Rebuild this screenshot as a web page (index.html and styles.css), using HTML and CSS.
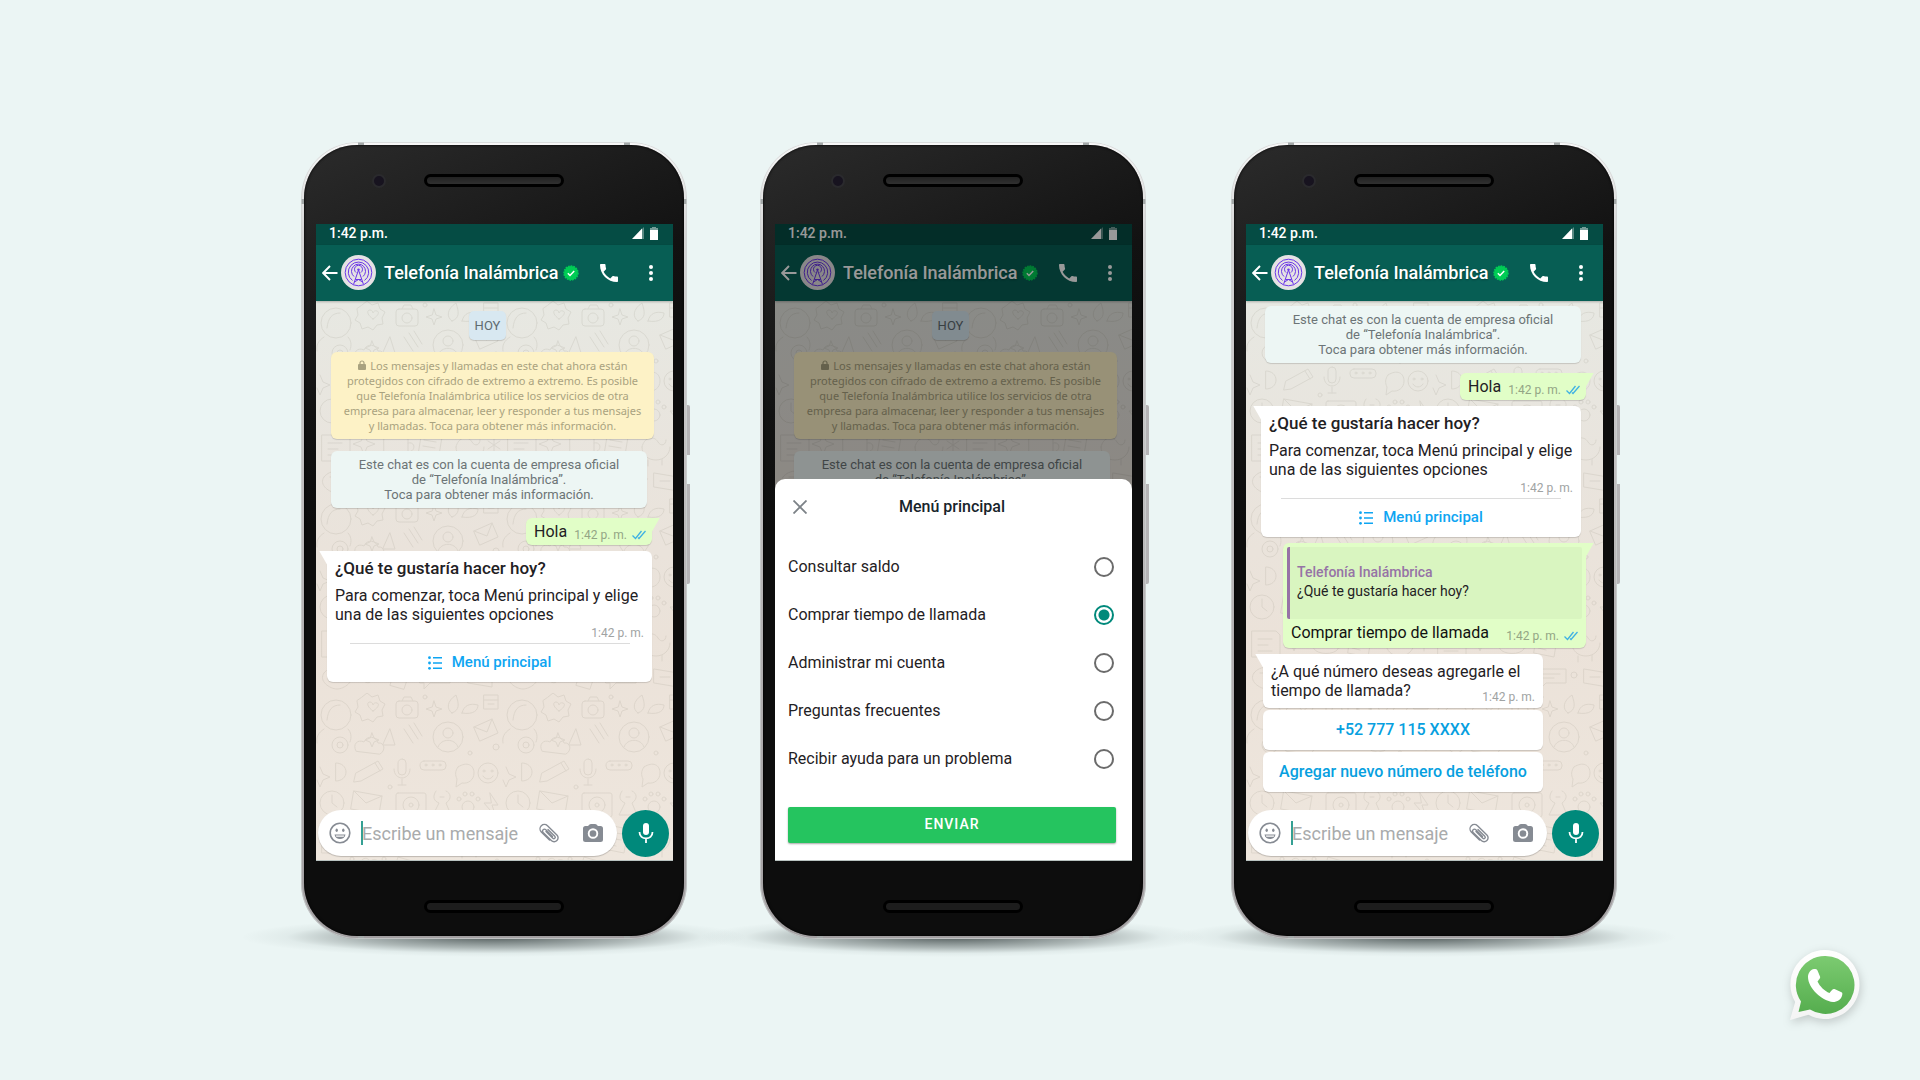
FILE: index.html
```html
<!DOCTYPE html>
<html lang="es">
<head>
<meta charset="utf-8">
<meta name="viewport" content="width=device-width, initial-scale=1">
<title>Telefonía Inalámbrica</title>
<link rel="stylesheet" href="styles.css">
</head>
<body>
<svg class="defs" width="0" height="0" aria-hidden="true">
  <defs>
    <pattern id="doodles" width="186" height="196" patternUnits="userSpaceOnUse">
      <g fill="none" stroke="#8c8878" stroke-width="1" stroke-linecap="round" stroke-linejoin="round">
        <circle cx="20" cy="22" r="15"/><path d="M11 27c1-10 5-15 13-15M8 36c-6 4-8 8-7 14M32 36c3 3 4 8 2 13"/>
        <path d="M46 4l5-4 5 4 6-2 2 6 5 3-3 6 1 6-6 1-4 5-5-3-6 2-2-6-5-3 3-5-1-6z"/><path d="M57 18c-7-5-6-9-3-9 2 0 3 2 3 3 0-1 2-3 4-2 3 1 1 5-4 8z"/>
        <rect x="80" y="8" width="22" height="17" rx="3"/><circle cx="91" cy="17" r="5"/><path d="M86 8l2-4h7l2 4"/>
        <path d="M118 8l2 6 6 2-6 2-2 6-2-6-6-2 6-2z"/><circle cx="109" cy="4" r="2"/>
        <path d="M136 20c-6-4-5-12 4-18 3 9 4 15-4 18zM146 20c12 2 16-3 16-8-8-2-14 0-16 8z"/>
        <path d="M168 2h14v14h-14zM168 7h14M172 11h6"/>
        <circle cx="132" cy="44" r="15"/><circle cx="132" cy="40" r="5"/><path d="M122 54c3-9 17-9 20 0"/>
        <path d="M88 36l9 14M93 32l9 14M98 30l8 13M74 36l5 16h-12zM56 40l2 5 5 2-5 2-2 5-2-5-5-2 5-2z"/>
        <path d="M40 58c-4-7 2-12 8-9 3-7 12-6 14 1 7-1 8 8 2 11z"/><circle cx="24" cy="52" r="8"/><circle cx="24" cy="52" r="3"/>
        <path d="M158 34l18-8 6 14-18 8zM158 34l13 5 5-13"/><circle cx="180" cy="54" r="3"/><circle cx="154" cy="60" r="2"/>
        <path d="M4 74l3 7 7 3-7 3-3 7-3-7M20 70c6 0 10 4 10 9s-4 9-10 9z"/>
        <path d="M40 80l22-12 5 8-22 12-7 1zM59 70l5 8"/>
        <rect x="82" y="66" width="8" height="16" rx="4"/><path d="M78 76c0 12 16 12 16 0M86 86v6M82 92h8"/>
        <rect x="104" y="68" width="26" height="9" rx="4"/><circle cx="110" cy="72" r="1"/><circle cx="117" cy="72" r="1"/><circle cx="124" cy="72" r="1"/>
        <path d="M142 74c9-6 16-2 16 6 0 7-6 11-12 10l-6 4 1-8c-2-4-2-8 1-12z"/>
        <circle cx="172" cy="80" r="10"/><circle cx="168" cy="78" r="1"/><circle cx="176" cy="78" r="1"/><path d="M167 83c2 4 8 4 10 0"/>
        <circle cx="16" cy="110" r="12"/><path d="M16 102v8l5 4"/>
        <path d="M38 98l28 5-3 18-28-5zM38 98l12 12 16-7"/><circle cx="74" cy="94" r="2"/><circle cx="70" cy="126" r="2"/>
        <rect x="80" y="100" width="30" height="24" rx="2"/><circle cx="95" cy="112" r="8"/><circle cx="95" cy="112" r="2"/>
        <path d="M120 98c-4 6-2 10 3 12l-6 12h18l-5-12c6-4 5-10 0-12M124 104h4"/>
        <circle cx="152" cy="114" r="6"/><circle cx="143" cy="106" r="2"/><circle cx="149" cy="101" r="2"/><circle cx="156" cy="101" r="2"/><circle cx="162" cy="106" r="2"/>
        <path d="M174 100l8 12h-6l4 12-12-14h7z"/>
        <path d="M6 134h24l4 4v22H6zM12 142h14M12 148h10M12 154h14"/>
        <path d="M48 132l3 8 8 3-8 3-3 8-3-8-8-3 8-3z"/>
        <path d="M68 138c8-6 18-6 24 0v14c-4 6-20 6-24 0zM92 142c8-2 8 9 0 9"/>
        <path d="M106 132l20 4-4 24-20-4zM108 139l12 2M107 145l12 2M106 151l8 2"/><circle cx="134" cy="134" r="2"/>
        <path d="M140 146c2-10 12-12 16-5 3 5 8 3 8-2M140 146c0 8 6 13 14 13s14-6 14-13M146 159v6M160 158v6"/>
        <path d="M178 134v20M172 140l12 8M184 140l-12 8"/>
        <path d="M8 176c6-8 20-8 26 0s-6 16-13 16-19-8-13-16zM14 176h14"/>
        <path d="M46 172c-4-6 6-10 8-3 4-6 12 0 7 5 6 3 1 12-5 8-2 7-11 3-8-3-7 0-8-7-2-7z"/>
        <path d="M74 188l8-24 14 4-8 24zM78 176l14 4"/><circle cx="68" cy="166" r="2"/>
        <path d="M104 172h30v14h-20l-6 6v-6h-4zM110 177h18M110 181h12"/><circle cx="142" cy="178" r="3"/>
        <path d="M152 172l24 4v14l-24-4zM158 180h10"/><circle cx="181" cy="168" r="2"/><circle cx="36" cy="166" r="2"/>
      </g>
    </pattern>
    <linearGradient id="logo-green" x1="0" y1="0" x2="0" y2="1"><stop offset="0" stop-color="#7ccb71"/><stop offset="1" stop-color="#55ad4e"/></linearGradient>
    <linearGradient id="logo-rim" x1="0" y1="0" x2="0" y2="1"><stop offset="0" stop-color="#fff"/><stop offset="1" stop-color="#f4f4f4"/></linearGradient>
  </defs>
  <symbol id="i-signal" viewBox="0 0 12 12"><path d="M10 1.500V12H0z" fill="#fff"/><path d="M12 0v12h-2V2z" fill="#fff" opacity=".35"/></symbol>
  <symbol id="i-battery" viewBox="0 0 8 13"><path d="M2 0h4v1h2v2H0V1h2z" fill="#fff" opacity=".45"/><path d="M0 3h8v10H0z" fill="#fff"/></symbol>
  <symbol id="i-back" viewBox="0 0 16 16"><path d="M15.500 8H1.500M8 1L1.200 8 8 15" fill="none" stroke="#fff" stroke-width="1.900"/></symbol>
  <symbol id="i-avatar" viewBox="0 0 35 35">
    <circle cx="17.500" cy="17.500" r="17.500" fill="#e5e2e4"/>
    <g fill="none" stroke="#6a35e8" stroke-width="1"><circle cx="17.500" cy="17.500" r="13.300"/><path d="M11.500 25.500a10.200 10.200 0 1 1 12 0M13 21.500a7 7 0 1 1 9 0M15.200 17.600a4 4 0 1 1 4.600 0M17.500 15L12.500 29.500M17.500 15l5 14.500M14.500 24.500h6M13.500 27l4-2.500 4 2.500"/></g>
    <circle cx="17.500" cy="14.600" r="1.200" fill="#6a35e8"/>
  </symbol>
  <symbol id="i-verified" viewBox="0 0 16 16"><circle cx="8" cy="8" r="7" fill="#0c5" stroke="#0c5" stroke-width="1.500" stroke-dasharray="1.700 1"/><path d="M4.800 8.300l2.200 2.200 4.200-4.500" fill="none" stroke="#fff" stroke-width="1.500"/></symbol>
  <symbol id="i-phone" viewBox="3 3 18 18"><path fill="#fff" d="M6.620 10.790c1.440 2.830 3.760 5.140 6.590 6.590l2.200-2.200c.270-.270.670-.360 1.020-.240 1.120.370 2.330.570 3.570.570.550 0 1 .450 1 1V20c0 .550-.450 1-1 1-9.390 0-17-7.610-17-17 0-.550.450-1 1-1h3.500c.550 0 1 .450 1 1 0 1.250.200 2.450.570 3.570.110.350.030.740-.250 1.020l-2.200 2.200z"/></symbol>
  <symbol id="i-more" viewBox="0 0 4 18"><g fill="#fff"><circle cx="2" cy="3" r="2"/><circle cx="2" cy="9" r="2"/><circle cx="2" cy="15" r="2"/></g></symbol>
  <symbol id="i-lock" viewBox="0 0 8 10"><path d="M2 5V3a2 2 0 0 1 4 0v2" fill="none" stroke="currentColor" stroke-width="1.200"/><rect y="4" width="8" height="6" rx="1" fill="currentColor"/></symbol>
  <symbol id="i-ticks" viewBox="0 0 14 10"><path d="M.500 5.500l3 3L9.500 1M6 7.500l1 1L13.500 1" fill="none" stroke="#3fb1e3" stroke-width="1.300"/></symbol>
  <symbol id="i-list" viewBox="0 0 14 14"><g fill="#0ea5f2"><circle cx="1.500" cy="1.700" r="1.400"/><circle cx="1.500" cy="7" r="1.400"/><circle cx="1.500" cy="12.300" r="1.400"/><path d="M5 1h9v1.500H5zM5 6.300h9v1.500H5zM5 11.600h9v1.500H5z"/></g></symbol>
  <symbol id="i-smile" viewBox="0 0 22 22"><circle cx="11" cy="11" r="9.800" fill="none" stroke="#868b93" stroke-width="1.600"/><ellipse cx="7.700" cy="8.300" rx="1.200" ry="1.700" fill="#868b93"/><ellipse cx="14.300" cy="8.300" rx="1.200" ry="1.700" fill="#868b93"/><path d="M5.500 12.500h11c-.800 6-10.200 6-11 0z" fill="#868b93"/><path d="M6.800 13.500h8.400l-.500 1.200H7.300z" fill="#fff"/></symbol>
  <symbol id="i-clip" viewBox="0 0 22 20"><path d="M13.500 13.500L6.800 6.700a1.900 1.900 0 0 0-2.700 2.700l8.200 8.200a3.900 3.900 0 0 0 5.600 0 3.900 3.900 0 0 0 0-5.600L8.500 2.700a4.400 4.400 0 0 0-6.200 0 4.400 4.400 0 0 0 0 6.200L10.500 17M9 6.500l6.800 6.800a1.400 1.400 0 0 1-2 2L7 8.500" fill="none" stroke="#868b93" stroke-width="1.400" stroke-linecap="round"/></symbol>
  <symbol id="i-camera" viewBox="0 0 20 18"><path d="M5 2l1.500-1.500Q7 0 8 0h4q1 0 1.500.500L15 2h2.500Q20 2 20 4.500v11q0 2.500-2.500 2.500h-15Q0 18 0 15.500v-11Q0 2 2.500 2z" fill="#868b93"/><circle cx="10" cy="9.500" r="4.300" fill="none" stroke="#fff" stroke-width="1.900"/></symbol>
  <symbol id="i-mic" viewBox="0 0 16 20"><rect x="5" y="0" width="6" height="12" rx="3" fill="#fff"/><path d="M1.500 9c0 8.500 13 8.500 13 0M8 15.500V20" fill="none" stroke="#fff" stroke-width="1.800"/></symbol>
  <symbol id="i-close" viewBox="0 0 14 14"><path d="M.500.500l13 13M13.500.500l-13 13" stroke="#7c8287" stroke-width="1.800"/></symbol>
</svg>

<main class="stage">
  <section class="phone" aria-label="Conversación">
    <div class="face">
      <span class="camera"></span><span class="speaker speaker-top"></span>
      <div class="screen">
        <div class="status"><span>1:42 p.m.</span><svg class="signal"><use href="#i-signal"/></svg><svg class="battery"><use href="#i-battery"/></svg></div>
        <header class="bar">
          <button class="icon back" aria-label="Atrás"><svg><use href="#i-back"/></svg></button>
          <svg class="avatar"><use href="#i-avatar"/></svg>
          <h2 class="name">Telefonía Inalámbrica</h2>
          <svg class="verified"><use href="#i-verified"/></svg>
          <button class="icon call" aria-label="Llamar"><svg><use href="#i-phone"/></svg></button>
          <button class="icon more" aria-label="Más opciones"><svg><use href="#i-more"/></svg></button>
        </header>
        <div class="chat">
          <svg class="wallpaper" aria-hidden="true"><rect width="100%" height="100%" fill="url(#doodles)"/></svg>
          <div class="messages">
            <p class="day">HOY</p>
            <p class="notice secure"><svg class="lock"><use href="#i-lock"/></svg> Los mensajes y llamadas en este chat ahora están<br>protegidos con cifrado de extremo a extremo. Es posible<br>que Telefonía Inalámbrica utilice los servicios de otra<br>empresa para almacenar, leer y responder a tus mensajes<br>y llamadas. Toca para obtener más información.</p>
            <p class="notice official">Este chat es con la cuenta de empresa oficial<br>de “Telefonía Inalámbrica”.<br>Toca para obtener más información.</p>
            <div class="bubble sent short"><p>Hola</p><span class="time">1:42 p. m.</span><svg class="ticks"><use href="#i-ticks"/></svg></div>
            <article class="bubble received menu">
              <h3>¿Qué te gustaría hacer hoy?</h3>
              <p>Para comenzar, toca Menú principal y elige<br>una de las siguientes opciones</p>
              <span class="time">1:42 p. m.</span>
              <button class="open-menu"><svg><use href="#i-list"/></svg>Menú principal</button>
            </article>
          </div>
          <div class="composer">
            <div class="field"><svg class="smile"><use href="#i-smile"/></svg><input type="text" aria-label="Mensaje" placeholder="Escribe un mensaje"><svg class="clip"><use href="#i-clip"/></svg><svg class="cam"><use href="#i-camera"/></svg></div>
            <button class="mic" aria-label="Grabar"><svg><use href="#i-mic"/></svg></button>
          </div>
        </div>
      </div>
      <span class="speaker speaker-bottom"></span>
    </div>
  </section>

  <section class="phone" aria-label="Menú">
    <div class="face">
      <span class="camera"></span><span class="speaker speaker-top"></span>
      <div class="screen">
        <div class="status"><span>1:42 p.m.</span><svg class="signal"><use href="#i-signal"/></svg><svg class="battery"><use href="#i-battery"/></svg></div>
        <header class="bar">
          <button class="icon back" aria-label="Atrás"><svg><use href="#i-back"/></svg></button>
          <svg class="avatar"><use href="#i-avatar"/></svg>
          <h2 class="name">Telefonía Inalámbrica</h2>
          <svg class="verified"><use href="#i-verified"/></svg>
          <button class="icon call" aria-label="Llamar"><svg><use href="#i-phone"/></svg></button>
          <button class="icon more" aria-label="Más opciones"><svg><use href="#i-more"/></svg></button>
        </header>
        <div class="chat">
          <svg class="wallpaper" aria-hidden="true"><rect width="100%" height="100%" fill="url(#doodles)"/></svg>
          <div class="messages inset">
            <p class="day">HOY</p>
            <p class="notice secure"><svg class="lock"><use href="#i-lock"/></svg> Los mensajes y llamadas en este chat ahora están<br>protegidos con cifrado de extremo a extremo. Es posible<br>que Telefonía Inalámbrica utilice los servicios de otra<br>empresa para almacenar, leer y responder a tus mensajes<br>y llamadas. Toca para obtener más información.</p>
            <p class="notice official">Este chat es con la cuenta de empresa oficial<br>de “Telefonía Inalámbrica”.</p>
          </div>
        </div>
        <div class="scrim">
          <form class="sheet">
            <div class="sheet-head"><button type="button" class="icon close" aria-label="Cerrar"><svg><use href="#i-close"/></svg></button><h3>Menú principal</h3></div>
            <div class="options">
              <label>Consultar saldo<input type="radio" name="option"></label>
              <label>Comprar tiempo de llamada<input type="radio" name="option" checked></label>
              <label>Administrar mi cuenta<input type="radio" name="option"></label>
              <label>Preguntas frecuentes<input type="radio" name="option"></label>
              <label>Recibir ayuda para un problema<input type="radio" name="option"></label>
            </div>
            <button type="button" class="submit">ENVIAR</button>
          </form>
        </div>
      </div>
      <span class="speaker speaker-bottom"></span>
    </div>
  </section>

  <section class="phone last" aria-label="Respuesta">
    <div class="face">
      <span class="camera"></span><span class="speaker speaker-top"></span>
      <div class="screen">
        <div class="status"><span>1:42 p.m.</span><svg class="signal"><use href="#i-signal"/></svg><svg class="battery"><use href="#i-battery"/></svg></div>
        <header class="bar">
          <button class="icon back" aria-label="Atrás"><svg><use href="#i-back"/></svg></button>
          <svg class="avatar"><use href="#i-avatar"/></svg>
          <h2 class="name">Telefonía Inalámbrica</h2>
          <svg class="verified"><use href="#i-verified"/></svg>
          <button class="icon call" aria-label="Llamar"><svg><use href="#i-phone"/></svg></button>
          <button class="icon more" aria-label="Más opciones"><svg><use href="#i-more"/></svg></button>
        </header>
        <div class="chat">
          <svg class="wallpaper" aria-hidden="true"><rect width="100%" height="100%" fill="url(#doodles)"/></svg>
          <div class="messages inset scrolled">
            <p class="notice official">Este chat es con la cuenta de empresa oficial<br>de “Telefonía Inalámbrica”.<br>Toca para obtener más información.</p>
            <div class="bubble sent short"><p>Hola</p><span class="time">1:42 p. m.</span><svg class="ticks"><use href="#i-ticks"/></svg></div>
            <article class="bubble received menu narrow">
              <h3>¿Qué te gustaría hacer hoy?</h3>
              <p>Para comenzar, toca Menú principal y elige<br>una de las siguientes opciones</p>
              <span class="time">1:42 p. m.</span>
              <button class="open-menu"><svg><use href="#i-list"/></svg>Menú principal</button>
            </article>
            <article class="bubble sent reply">
              <blockquote class="quote"><strong>Telefonía Inalámbrica</strong><span>¿Qué te gustaría hacer hoy?</span></blockquote>
              <div class="reply-row"><p>Comprar tiempo de llamada</p><span class="time">1:42 p. m.</span><svg class="ticks"><use href="#i-ticks"/></svg></div>
            </article>
            <div class="question">
              <article class="bubble received ask"><p>¿A qué número deseas agregarle el<br>tiempo de llamada?</p><span class="time">1:42 p. m.</span></article>
              <button class="choice">+52 777 115 XXXX</button>
              <button class="choice">Agregar nuevo número de teléfono</button>
            </div>
          </div>
          <div class="composer">
            <div class="field"><svg class="smile"><use href="#i-smile"/></svg><input type="text" aria-label="Mensaje" placeholder="Escribe un mensaje"><svg class="clip"><use href="#i-clip"/></svg><svg class="cam"><use href="#i-camera"/></svg></div>
            <button class="mic" aria-label="Grabar"><svg><use href="#i-mic"/></svg></button>
          </div>
        </div>
      </div>
      <span class="speaker speaker-bottom"></span>
    </div>
  </section>
</main>

<svg class="logo" viewBox="0 0 70 70" role="img" aria-label="WhatsApp">
  <path d="M35 0A34.500 34.500 0 1 1 18.500 64.800L0 70 5.200 52A34.500 34.500 0 0 1 35 0z" fill="url(#logo-rim)"/>
  <path d="M35 6A29 29 0 1 1 20 59.500L8.500 62 11 51.500A29 29 0 0 1 35 6z" fill="url(#logo-green)"/>
  <path d="M18 27c0-4 3-8 6-8 2 0 3 .300 3.500 1.500l2.500 6c.500 1.200 0 2-2.500 5 2.500 5 7 9.500 12 11.500 2.500-3.500 3.500-4.500 5-4l6.500 3c1.500.800 1.500 1.200 1.200 3C51.500 49.500 47 52 43 52 32 51 18 38 18 27z" fill="#fff"/>
</svg>
</body>
</html>
```
FILE: styles.css
```css
* { box-sizing: border-box; }
body { margin: 0; background: #ebf5f4; color: #1f2124; font-family: Roboto, "Noto Sans", sans-serif; font-size: 16px; line-height: 19px; }
p, h2, h3, blockquote { margin: 0; font-size: inherit; }
button, input { font: inherit; color: inherit; margin: 0; }
button { border: 0; padding: 0; background: none; cursor: pointer; }
svg { display: block; flex: none; }
.defs { position: absolute; }

.stage { min-height: 100vh; display: flex; justify-content: center; align-items: center; gap: 73px; padding: 24px 24px 24px 22px; }

/* Handset: the two see-through gradients draw the antenna bands on the rim */
.phone { position: relative; flex: none; width: 386px; padding: 3px; border-radius: 56px; background:
  linear-gradient(90deg, transparent 57px, #a3a8a8 57px, #a3a8a8 63px, transparent 63px, transparent 323px, #a3a8a8 323px, #a3a8a8 329px, transparent 329px),
  linear-gradient(transparent 57px, #a3a8a8 57px, #a3a8a8 62px, transparent 62px),
  linear-gradient(#f8f8f8, #d5d5d5 12%, #b4b2b3 60%, #a29fa1); box-shadow: inset 0 0 0 1px rgba(205, 210, 210, .7); }
.phone.last { margin-left: 12px; }
.phone::before { content: ""; position: absolute; z-index: -1; left: -60px; right: -60px; bottom: -18px; height: 40px; background: radial-gradient(closest-side, rgba(20, 30, 30, .7), rgba(30, 40, 40, .3) 55%, rgba(60, 80, 80, .06) 82%, transparent); }
.phone::after { content: ""; position: absolute; left: 100%; top: 263px; width: 3px; height: 179px; border-radius: 0 2px 2px 0; background: linear-gradient(#b5b4b6 50px, transparent 50px, transparent 79px, #b5b4b6 79px); }
.face { position: relative; display: flex; flex-direction: column; padding: 79px 11px 75px 12px; border-radius: 53px; background: linear-gradient(155deg, #2b2b2b, #121212 28%, #0d0d0d 40%); box-shadow: inset 0 0 3px #000; }
.camera { position: absolute; left: 68px; top: 29px; width: 14px; height: 14px; border: 2px solid #2a2a2d; border-radius: 50%; background: #17131f; }
.speaker { position: absolute; left: 120px; width: 140px; height: 13px; border: 3px solid #000; border-radius: 7px; background: linear-gradient(#222, #303030); }
.speaker-top { top: 29px; }
.speaker-bottom { bottom: 23px; background: #1d1d1d; }
.screen { position: relative; display: flex; flex-direction: column; min-height: 637px; border-bottom: 1px solid #b9c2c0; overflow: hidden; }

.status { display: flex; align-items: center; gap: 6px; height: 21px; padding: 0 15px 2px 13px; background: #054c44; color: #fff; font-size: 14px; font-weight: 500; line-height: 16px; }
.status span { flex: 1; }
.signal { width: 12px; height: 12px; }
.battery { width: 8px; height: 13px; }
.bar { display: flex; align-items: center; height: 56px; padding: 0 20px 0 6px; background: #075e54; box-shadow: 0 1px 2px rgba(0, 0, 0, .25); color: #fff; z-index: 1; }
.back svg { width: 16px; height: 16px; }
.avatar { width: 35px; height: 35px; margin: 0 8px 0 3px; }
.name { font-size: 18px; font-weight: 500; line-height: 24px; text-shadow: 0 1px 2px rgba(0, 0, 0, .3); white-space: nowrap; }
.verified { width: 16px; height: 16px; margin-left: 5px; }
.call { margin-left: auto; }
.call svg { width: 18px; height: 18px; }
.more { margin-left: 31px; }
.more svg { width: 4px; height: 18px; }

.chat { position: relative; flex: 1; display: flex; flex-direction: column; background: linear-gradient(#e7e8e2, #e9e4dd 30%, #ebe2d9 60%, #eee6dd); }
.wallpaper { position: absolute; inset: 0; width: 100%; height: 100%; opacity: .15; }
.messages { position: relative; flex: 1; display: flex; flex-direction: column; align-items: flex-start; padding: 10px 21px 10px 11px; }
.messages.inset { padding: 10px 17px 10px 15px; }
.messages.scrolled { padding-top: 5px; }

.day { align-self: center; padding: 6px; margin: 0 4px 12px 0; border-radius: 5px; background: #d8e8f1; box-shadow: 0 1px 1px rgba(0, 0, 0, .15); color: #5f6b70; font-size: 13px; line-height: 17px; }
.notice { margin-left: 4px; padding: 6px 0; border-radius: 6px; box-shadow: 0 1px 1px rgba(0, 0, 0, .15); text-align: center; line-height: 15px; white-space: nowrap; }
.secure { width: 323px; margin-bottom: 12px; background: #fdf2c6; color: #a9a27f; font-family: "Noto Sans", sans-serif; font-size: 11px; }
.lock { display: inline-block; width: 8px; height: 10px; margin-right: 2px; }
.official { width: 316px; margin-bottom: 10px; background: #edf6f4; color: #6c7476; font-size: 13px; }

.bubble { position: relative; border-radius: 6px; box-shadow: 0 1px 1px rgba(0, 0, 0, .15); white-space: nowrap; }
.sent { align-self: flex-end; margin-bottom: 6px; background: #e1fec7; border-top-right-radius: 0; }
.received { background: #fff; border-top-left-radius: 0; }
.bubble::before { content: ""; position: absolute; top: 0; width: 8px; height: 14px; background: inherit; }
.sent::before { left: 100%; clip-path: polygon(0 0, 100% 0, 0 100%); }
.received::before { right: 100%; clip-path: polygon(0 0, 100% 0, 100% 100%); }
.time { color: #a0a3a3; font-size: 12px; line-height: 14px; }
.sent .time { color: #93a585; }
.ticks { width: 14px; height: 10px; }
.short { display: flex; gap: 5px; width: 126px; height: 27px; padding: 4px 6px 0 8px; }
.short p { margin-right: auto; }
.short .time { padding-top: 6px; }
.short .ticks { margin-top: 8px; }

.menu { width: 325px; padding: 8px 8px 0; margin-bottom: 6px; }
.menu.narrow { width: 320px; }
.menu h3 { margin-bottom: 8px; font-size: 17px; font-weight: 500; }
.menu .time { display: block; margin-top: 2px; text-align: right; }
.open-menu { display: flex; align-items: center; justify-content: center; gap: 10px; width: 280px; height: 39px; margin: 3px auto 0; border-top: 1px solid #dcdcdc; color: #0ea5f2; font-size: 15px; font-weight: 500; }
.open-menu svg { width: 14px; height: 14px; }

.reply { width: 303px; padding: 4px; }
.quote { display: flex; flex-direction: column; justify-content: center; height: 72px; padding: 0 7px 1px; border-left: 3px solid #9673a6; border-radius: 2px; background: #d9f5c0; font-size: 14px; }
.quote strong { color: #9673a6; font-weight: 500; }
.reply-row { display: flex; gap: 5px; height: 25px; padding: 4px 4px 0; color: #111; }
.reply-row p { margin-right: auto; }
.reply-row .time { padding-top: 6px; }
.reply-row .ticks { margin-top: 8px; }

.question { display: flex; flex-direction: column; gap: 2px; width: 280px; margin-left: 2px; }
.ask { display: flex; padding: 8px; }
.ask .time { position: absolute; right: 8px; bottom: 4px; }
.choice { height: 40px; border-radius: 6px; background: #fff; box-shadow: 0 1px 1px rgba(0, 0, 0, .15); color: #079fe0; font-weight: 500; }

.composer { position: relative; display: flex; align-items: center; gap: 5px; padding: 0 4px 3px 2px; }
.field { flex: 1; display: flex; align-items: center; min-width: 0; height: 46px; padding: 0 14px 0 11px; border-radius: 23px; background: #fff; box-shadow: 0 1px 1px rgba(0, 0, 0, .2); }
.field input { flex: 1; min-width: 0; height: 24px; margin-left: 10px; padding: 1px 0 0; border: 0; border-left: 2px solid #35a093; outline: 0; background: none; font-size: 18px; line-height: 23px; text-indent: -1px; }
.field input::placeholder { color: #a9abac; opacity: 1; }
.smile { width: 22px; height: 22px; }
.clip { width: 22px; height: 20px; margin-right: 22px; }
.cam { width: 20px; height: 18px; }
.mic { display: grid; place-items: center; flex: none; width: 47px; height: 47px; border-radius: 50%; background: #00897b; }
.mic svg { width: 16px; height: 20px; }

/* Bottom sheet */
.scrim { position: absolute; inset: 0; z-index: 2; display: flex; flex-direction: column; justify-content: flex-end; background: rgba(0, 0, 0, .4); }
.sheet { padding: 18px 16px 17px 13px; border-radius: 10px 10px 0 0; background: #fff; }
.sheet-head { display: grid; grid-template-columns: 24px 1fr 24px; align-items: center; height: 20px; margin-bottom: 26px; }
.sheet-head h3 { color: #17242b; font-weight: 500; text-align: center; }
.close { justify-self: center; }
.close svg { width: 14px; height: 14px; }
.options label { display: flex; align-items: center; justify-content: space-between; height: 48px; padding-right: 2px; }
.options input { appearance: none; width: 20px; height: 20px; border: 2px solid #6b6b6b; border-radius: 50%; background: #fff; }
.options input:checked { border-color: #00897b; background: radial-gradient(circle, #00897b 5px, #fff 6px); }
.submit { display: block; width: 100%; height: 36px; margin-top: 24px; border-radius: 2px; background: #25c45f; box-shadow: 0 1px 2px rgba(0, 0, 0, .35); color: #fff; font-size: 14px; font-weight: 500; letter-spacing: 1px; }

.logo { position: fixed; right: 60px; bottom: 60px; width: 70px; height: 70px; filter: drop-shadow(1px 3px 5px rgba(0, 0, 0, .18)); }
```
